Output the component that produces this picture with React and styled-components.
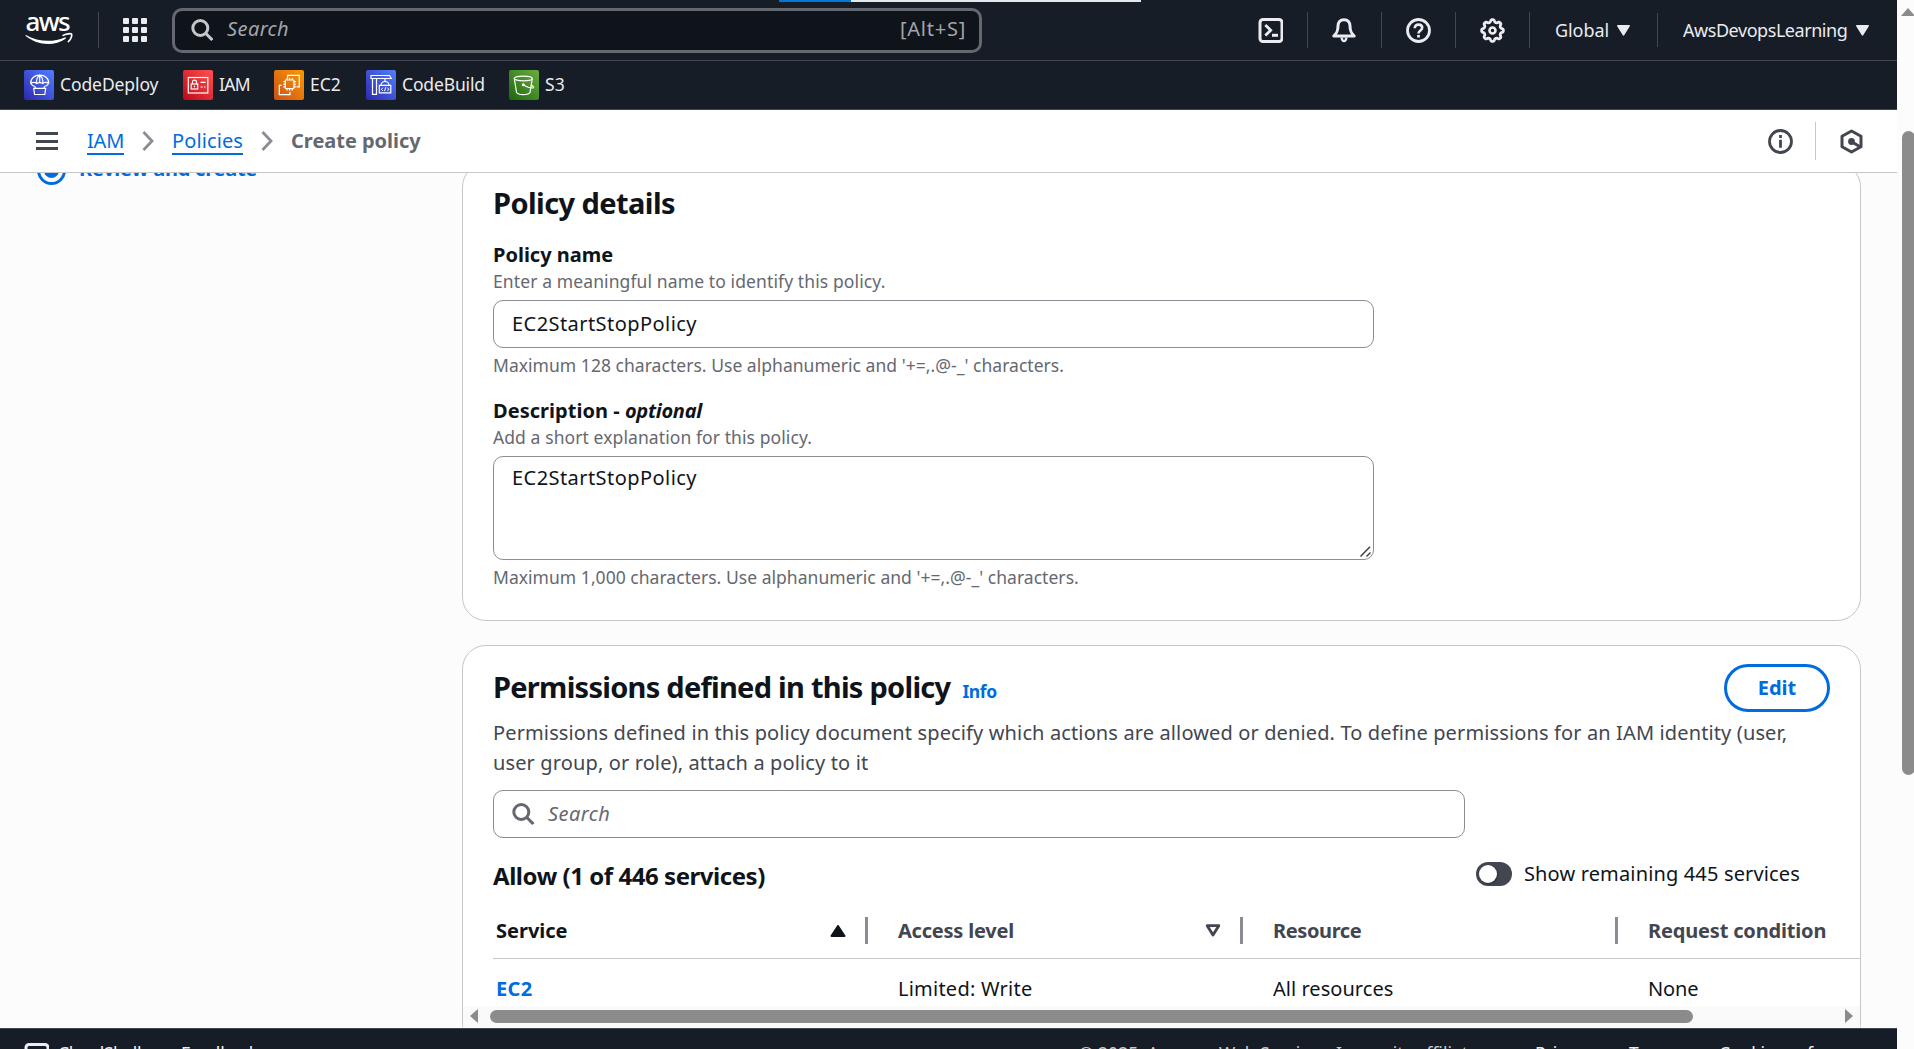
import React from "react";
import styled, { createGlobalStyle, css } from "styled-components";

const GlobalStyle = createGlobalStyle`
  *, *::before, *::after { box-sizing: border-box; }
  html, body { margin: 0; padding: 0; height: 100%; overflow: hidden; }
  body {
    font-family: "Noto Sans", "Open Sans", sans-serif;
    font-size: 20px;
    line-height: 24px;
    color: #0f141a;
    background: #fcfcfd;
  }
  a { color: inherit; text-decoration: none; }
`;

const spacing = css`
  letter-spacing: ${(p) => p.$ls || 0}px;
`;

/* ---------- Shell ---------- */
const Shell = styled.div`
  display: flex;
  width: 100vw;
  height: 100vh;
  overflow: hidden;
`;

const Page = styled.div`
  flex: 1;
  min-width: 0;
  display: flex;
  flex-direction: column;
`;

const LoadStrip = styled.div`
  position: absolute;
  top: 0;
  left: 779px;
  width: 362px;
  height: 2px;
  background: linear-gradient(to right, #0078d7 72px, #e3e8ea 72px);
`;

const ScrollTrack = styled.div`
  width: 17px;
  padding: 8px 0 0 4px;
  background: #fcfcfc;
  overflow: hidden;
`;

const ScrollUp = styled.div`
  width: 14px;
  border-left: 7px solid transparent;
  border-right: 7px solid transparent;
  border-bottom: 8px solid #8b8b8b;
`;

const ScrollThumb = styled.div`
  width: 13px;
  height: 644px;
  margin: 115px 0 0 1px;
  border-radius: 7px;
  background: #8b8b8b;
`;

/* ---------- Top navigation ---------- */
const TopBar = styled.header`
  flex: none;
  height: 61px;
  display: flex;
  align-items: center;
  background: #161d26;
  border-bottom: 1px solid #424650;
  color: #ebebf0;
`;

const LogoSlot = styled.div`
  width: 99px;
  height: 36px;
  padding-left: 25px;
  border-right: 1px solid #424650;
  svg { display: block; margin-top: 3px; overflow: visible; }
`;

const AppsButton = styled.div`
  width: 73px;
  display: flex;
  padding-left: 24px;
`;

const SearchBox = styled.div`
  width: 810px;
  height: 45px;
  display: flex;
  align-items: center;
  padding: 0 13px 0 16px;
  border: 3px solid #656871;
  border-radius: 10px;
  background: #0f141a;
  color: #a4a4ad;
`;

const Placeholder = styled.span`
  flex: 1;
  padding-bottom: ${(p) => p.$lift || 0}px;
  margin-left: ${(p) => p.$gap}px;
  font-style: italic;
  ${spacing}
`;

const Shortcut = styled.span`
  padding-bottom: 2px;
  ${spacing}
`;

const Tools = styled.div`
  display: flex;
  align-items: center;
  margin-left: auto;
`;

const ToolSlot = styled.div`
  width: 74px;
  height: 36px;
  display: flex;
  align-items: center;
  justify-content: center;
  border-right: 1px solid #424650;
`;

const MenuSlot = styled.div`
  width: ${(p) => p.$w}px;
  height: 34px;
  display: flex;
  align-items: center;
  justify-content: space-between;
  padding: 0 ${(p) => (p.$last ? 28 : 27)}px 0 25px;
  border-right: ${(p) => (p.$last ? "none" : "1px solid #424650")};
  font-size: 18px;
  span { padding-bottom: 1px; white-space: nowrap; ${spacing} }
`;

const Favorites = styled.nav`
  flex: none;
  height: 49px;
  display: flex;
  align-items: center;
  padding-left: 24px;
  background: #161d26;
  border-bottom: 1px solid #424650;
`;

const Favorite = styled.a`
  width: ${(p) => p.$w}px;
  display: flex;
  align-items: center;
  gap: 6px;
  font-size: 17.5px;
  color: #ebebf0;
  white-space: nowrap;
  span { padding-bottom: 2px; ${spacing} }
`;

const ServiceIcon = styled.span`
  flex: none;
  width: 30px;
  height: 30px;
  display: block;
  border-radius: 2px;
  background: linear-gradient(45deg, ${(p) => p.$from}, ${(p) => p.$to});
  && { padding: 0; }
  svg { display: block; }
`;

/* ---------- Breadcrumbs ---------- */
const CrumbBar = styled.div`
  flex: none;
  height: 63px;
  display: flex;
  align-items: center;
  padding: 0 0 0 36px;
  background: #fff;
  border-bottom: 1px solid #c6c6cd;
`;

const MenuIcon = styled.div`
  width: 22px;
  height: 18px;
  margin-right: 29px;
  display: flex;
  flex-direction: column;
  justify-content: space-between;
  i { height: 3px; background: #424650; }
`;

const Crumb = styled.a`
  padding-top: 1px;
  border-bottom: 2px solid ${(p) => (p.$current ? "transparent" : "#006ce0")};
  color: ${(p) => (p.$current ? "#656871" : "#006ce0")};
  font-weight: ${(p) => (p.$current ? 700 : 400)};
  ${spacing}
`;

const Chevron = styled.svg`
  width: 12px;
  height: 20px;
  margin: 0 18px;
`;

const PanelButton = styled.div`
  height: 38px;
  display: flex;
  align-items: center;
  justify-content: center;
  width: ${(p) => p.$w}px;
  padding-right: ${(p) => p.$shift || 0}px;
  border-right: ${(p) => (p.$divided ? "1px solid #c6c6cd" : "none")};
`;

const PanelButtons = styled.div`
  margin-left: auto;
  display: flex;
`;

/* ---------- Body ---------- */
const Body = styled.div`
  flex: 1;
  min-height: 0;
  display: flex;
  align-items: flex-start;
  overflow: hidden;
  background: #fcfcfd;
`;

const Steps = styled.aside`
  width: 462px;
  margin-top: -17px;
  padding-left: 37px;
`;

const Step = styled.a`
  display: flex;
  align-items: center;
  gap: 13px;
  height: 29px;
  color: #006ce0;
  font-weight: 700;
  ${spacing}
`;

const StepDot = styled.i`
  width: 29px;
  height: 29px;
  display: grid;
  place-items: center;
  border: 3px solid #006ce0;
  border-radius: 50%;
  &::after {
    content: "";
    width: 15px;
    height: 15px;
    border-radius: 50%;
    background: #006ce0;
  }
`;

const StepText = styled.span`
  padding-bottom: 4px;
`;

const Cards = styled.main`
  width: 1399px;
  margin-top: -10px;
  display: flex;
  flex-direction: column;
  gap: 24px;
`;

const Card = styled.section`
  border: 1px solid #c6c6cd;
  border-radius: 24px;
  background: #fff;
  padding: ${(p) => p.$pad};
`;

const Heading = styled.h2`
  margin: 0;
  font-size: 29px;
  line-height: 36px;
  font-weight: 700;
  ${spacing}
`;

const Field = styled.div`
  width: 881px;
  display: flex;
  flex-direction: column;
  margin-top: ${(p) => p.$top}px;
`;

const Label = styled.label`
  font-weight: 700;
  ${spacing}
  em { letter-spacing: -0.3px; }
`;

const Hint = styled.p`
  margin: ${(p) => p.$top}px 0 0;
  font-size: 17.5px;
  line-height: 22px;
  color: #656871;
  ${spacing}
`;

const control = css`
  display: block;
  width: 100%;
  border: 1px solid #8c8c94;
  border-radius: 10px;
  outline: none;
  background: #fff;
  color: #0f141a;
  font: 20px/24px "Noto Sans", "Open Sans", sans-serif;
  letter-spacing: 0.44px;
`;

const Input = styled.input`
  ${control}
  height: 48px;
  margin: 8px 0 0;
  padding: 0 18px 1px;
`;

const TextAreaWrap = styled.div`
  position: relative;
  margin-top: 8px;
`;

const TextArea = styled.textarea`
  ${control}
  height: 104px;
  margin: 0;
  padding: 9px 18px;
  resize: none;
  overflow: hidden;
`;

const Grip = styled.svg`
  position: absolute;
  right: 2px;
  bottom: 2px;
  width: 12px;
  height: 12px;
`;

const CardHead = styled.div`
  display: flex;
  align-items: flex-start;
  justify-content: space-between;
  padding-right: 30px;
`;

const TitleGroup = styled.div`
  display: flex;
  align-items: baseline;
  gap: 12px;
  padding-top: 5px;
`;

const InfoLink = styled.a`
  font-size: 17.5px;
  font-weight: 700;
  color: #006ce0;
  ${spacing}
`;

const EditButton = styled.button`
  width: 106px;
  height: 48px;
  padding: 0 0 1px;
  border: 3px solid #006ce0;
  border-radius: 24px;
  background: #fff;
  color: #006ce0;
  font: 700 20px/24px "Noto Sans", "Open Sans", sans-serif;
`;

const Description = styled.p`
  margin: 6px 0 0;
  max-width: 1310px;
  line-height: 30px;
  color: #424650;
  ${spacing}
`;

const FilterBox = styled.div`
  width: 972px;
  height: 48px;
  margin-top: 12px;
  display: flex;
  align-items: center;
  padding: 0 18px;
  border: 1px solid #8c8c94;
  border-radius: 10px;
  color: #656871;
`;

const SummaryRow = styled.div`
  display: flex;
  justify-content: space-between;
  margin-top: 23px;
  padding-right: 60px;
`;

const SubHeading = styled.h3`
  margin: 0;
  font-size: 24px;
  line-height: 30px;
  font-weight: 700;
  ${spacing}
`;

const ToggleLabel = styled.div`
  height: 26px;
  display: flex;
  align-items: center;
  gap: 12px;
  span { padding-bottom: 1px; ${spacing} }
`;

const Toggle = styled.i`
  width: 36px;
  height: 24px;
  padding: 3px;
  border-radius: 12px;
  background: #424650;
  &::after {
    content: "";
    display: block;
    width: 18px;
    height: 18px;
    border-radius: 50%;
    background: #fff;
    box-shadow: 1px 1px 2px #0f141a80;
  }
`;

/* ---------- Table ---------- */
const Table = styled.div`
  height: 103px;
  margin-top: 12px;
  overflow: hidden;
`;

const Row = styled.div`
  display: grid;
  grid-template-columns: 375px 375px 375px 1fr;
`;

const HeadRow = styled(Row)`
  height: 56px;
  align-items: center;
  border-bottom: 1px solid #c6c6cd;
`;

const HeadCell = styled.div`
  height: 27px;
  display: flex;
  align-items: center;
  justify-content: space-between;
  padding: 0 19px 0 ${(p) => (p.$first ? 3 : 30)}px;
  border-right: ${(p) => (p.$last ? "none" : "3px solid #8c8c94")};
  color: ${(p) => (p.$first ? "#0f141a" : "#424650")};
  font-weight: 700;
  white-space: nowrap;
  ${spacing}
`;

const Cell = styled.div`
  padding: 18px 0 0 ${(p) => (p.$first ? 3 : 30)}px;
  color: ${(p) => (p.$first ? "#006ce0" : "#0f141a")};
  font-weight: ${(p) => (p.$first ? 700 : 400)};
  ${spacing}
`;

const HScroll = styled.div`
  height: 40px;
  margin-left: -30px;
  display: flex;
  align-items: flex-start;
  padding: 3px 7px 0 7px;
  background: #fafafa;
`;

const HArrow = styled.i`
  border-top: 7.5px solid transparent;
  border-bottom: 7.5px solid transparent;
  border-${(p) => p.$side}: 8px solid #8b8b8b;
`;

const HThumb = styled.div`
  width: 1203px;
  height: 13px;
  margin: 1px auto 0 12px;
  border-radius: 7px;
  background: #8b8b8b;
`;

/* ---------- Footer ---------- */
const Footer = styled.footer`
  flex: none;
  height: 21px;
  display: flex;
  align-items: flex-start;
  padding: 12px 0 0 24px;
  overflow: hidden;
  border-top: 1px solid #424650;
  background: #161d26;
  color: #ebebf0;
  font-size: 17.5px;
  white-space: nowrap;
  svg { flex: none; margin: 2px 9px 0 0; }
`;

const FooterLink = styled.a`
  flex: none;
  width: ${(p) => p.$w}px;
  ${spacing}
`;

const Copyright = styled.span`
  flex: none;
  width: 456px;
  margin-left: auto;
  color: #c6c6cd;
`;

/* ---------- Icons ---------- */
const AwsLogo = () => (
  <svg width="50" height="32" viewBox="0 0 50 32" fill="none">
    <text x="0.6" y="16.4" fill="#fff" fontSize="26" fontWeight="500" textLength="45" lengthAdjust="spacing" fontFamily="Noto Sans, sans-serif">aws</text>
    <path d="M0.4 20.6c0-.6.5-.7 1-.4 6.600 3.700 13.800 5.600 21.600 5.600 5.800 0 11.600-1.200 16.800-3.400.9-.3 1.600.6.800 1.300-4.700 3.600-11.500 5.300-17.300 5.300-8.400 0-16.300-3-22.600-8z" fill="#fff" />
    <path d="M38.200 20.400c2.300-1.800 8-2 8.400-1.300.5 1-.5 5.500-3.200 7.500" stroke="#fff" strokeWidth="1.700" strokeLinecap="round" />
  </svg>
);

const AppsIcon = () => (
  <svg width="24" height="24" viewBox="0 0 24 24" fill="#ebebf0">
    {[0, 9, 18].map((y) =>
      [0, 9, 18].map((x) => <rect key={`${x}-${y}`} x={x} y={y} width="6" height="6" rx="1" />)
    )}
  </svg>
);

const Magnifier = ({ color }) => (
  <svg width="22" height="22" viewBox="0 0 22 22" fill="none" stroke={color} strokeWidth="3">
    <circle cx="9.300" cy="9" r="7.500" />
    <path d="M14.600 14.300L21.300 21" />
  </svg>
);

const TerminalIcon = () => (
  <svg width="25" height="25" viewBox="0 0 25 25" fill="none" stroke="#ebebf0" strokeWidth="3">
    <rect x="2" y="1.500" width="22" height="22" rx="3" />
    <path d="M7.300 7l5.400 5.300-5.400 5.300" strokeWidth="2.800" />
    <path d="M14 17.300h6" />
  </svg>
);

const BellIcon = () => (
  <svg width="26" height="25" viewBox="1 0 26 25" fill="none" stroke="#ebebf0" strokeWidth="3" strokeLinejoin="round">
    <path d="M13 1.800c-4 0-6 2.700-6 6.300 0 5.400-1.400 7.200-4.200 9.900h20.400c-2.800-2.700-4.200-4.500-4.200-9.900 0-3.600-2-6.300-6-6.300z" />
    <path d="M9.400 19.500c.3 3 1.600 4.700 3.600 4.700s3.300-1.700 3.600-4.700z" fill="#ebebf0" stroke="none" />
    <circle cx="13" cy="20.800" r="1" fill="#161d26" stroke="none" />
  </svg>
);

const HelpIcon = () => (
  <svg width="25" height="25" viewBox="0 0 25 25" fill="none" stroke="#ebebf0" strokeWidth="2.800">
    <circle cx="12.500" cy="12.500" r="11" />
    <path d="M8.800 10.200c0-2.300 1.500-3.600 3.700-3.600s3.700 1.300 3.700 3.200c0 2.700-3.700 2.600-3.700 5.700" strokeWidth="2.600" />
    <path d="M12.500 16.900v2.600" />
  </svg>
);

const gearPath = (() => {
  const points = [];
  for (let i = 0; i <= 128; i += 1) {
    const a = (i / 128) * Math.PI * 2;
    const wave = Math.tanh(1.6 * Math.cos(8 * a)) / Math.tanh(1.6);
    const r = 9.7 + 1.15 * wave;
    points.push(`${(12.5 + r * Math.sin(a)).toFixed(2)} ${(12.5 - r * Math.cos(a)).toFixed(2)}`);
  }
  return `M${points.join("L")}Z`;
})();

const GearIcon = () => (
  <svg width="25" height="25" viewBox="0 0 25 25" fill="none" stroke="#ebebf0" strokeWidth="2.800" strokeLinejoin="round">
    <path d={gearPath} />
    <circle cx="12.500" cy="12.500" r="3" strokeWidth="2.600" />
  </svg>
);

const Caret = () => (
  <svg width="13" height="11" viewBox="0 0 13 11" fill="#ebebf0">
    <path d="M.8 0h11.400c.7 0 1 .6.6 1.200L7.200 10.300c-.3.6-1.100.6-1.400 0L.2 1.200C-.2.6.1 0 .8 0z" />
  </svg>
);

const InfoIcon = () => (
  <svg width="25" height="25" viewBox="0 0 25 25" fill="none" stroke="#424650" strokeWidth="2.800">
    <circle cx="12.500" cy="12.500" r="11" />
    <path d="M12.500 6v3M12.500 10.800v8" />
  </svg>
);

const HexIcon = () => (
  <svg width="23" height="25" viewBox="0 0 23 25" fill="none" stroke="#424650" strokeWidth="3" strokeLinejoin="round">
    <path d="M11.500 2l9.500 5.200v10.600L11.500 23 2 17.800V7.200z" />
    <circle cx="11.500" cy="12.500" r="3.400" fill="#424650" stroke="none" />
    <path d="M12 13l8 4.800" />
  </svg>
);

const Glyph = ({ children }) => (
  <svg width="30" height="30" viewBox="0 0 30 30" fill="none" stroke="#fff" strokeWidth="1.200">
    {children}
  </svg>
);

const DeployGlyph = () => (
  <Glyph>
    <path d="M6.700 13.500c-.5-5 3.800-8.300 9-8.300s9.500 3.300 9 8.300M6.700 13.500c1 1.600 2.400 2.600 4.300 3M24.700 13.500c-1 1.600-2.400 2.600-4.300 3M6.700 13.500c2-1.400 4-1.400 6 0 2-1.200 4-1.200 6 0 2-1.400 4-1.400 6 0" />
    <path d="M12.700 13.500c-.6-3.600.6-6.600 3-8.300 2.400 1.700 3.600 4.700 3 8.300M15.700 5.200v7.800M11 16.500l.5 2M20.400 16.500l-.5 2" />
    <path d="M9.700 18.300h12l-.9 6.200H10.600z" />
  </Glyph>
);

const IamGlyph = () => (
  <Glyph>
    <rect x="5.300" y="7.500" width="19.500" height="15.500" />
    <rect x="8.200" y="14" width="6.500" height="5" />
    <path d="M9.500 14v-2c0-2.600 4-2.600 4 0v2M11.500 15.800v1.500M17.500 12.300h5M17.500 17h2.200M21 17h1.500" />
  </Glyph>
);

const Ec2Glyph = () => (
  <Glyph>
    <path d="M13.700 8V5.300h11.600v11.500h-2.800M7.700 15.300H5.300v9.400H16v-2.900" />
    <rect x="11.300" y="10" width="8.600" height="8.600" rx=".8" />
    <path d="M13 8v2M15.600 8v2M18.200 8v2M13 18.600v2M15.600 18.600v2M18.200 18.600v2M9.300 11.700h2M9.300 14.300h2M9.300 16.900h2M19.900 11.700h2M19.900 14.300h2M19.900 16.900h2" />
  </Glyph>
);

const BuildGlyph = () => (
  <Glyph>
    <path d="M5 5.500h18.500l1.800 3H5zM6.500 8.500v15.800h4V8.500M19 8.500v3" />
    <path d="M13.300 15.300h11.500v7.500H13.300zM14.800 15.300c.5-2.500 2-3.800 4.200-3.800s3.700 1.300 4.200 3.800" />
    <path d="M16.800 17.700l-1.400 1.600 1.400 1.600M19.700 17.200l-1.200 4M21.500 17.700l1.300 1.600-1.300 1.600" strokeWidth="1" />
  </Glyph>
);

const S3Glyph = () => (
  <Glyph>
    <ellipse cx="14.300" cy="8.500" rx="9" ry="2.300" />
    <path d="M5.300 8.500l2.300 14c.8 1.500 3.600 2.100 6.700 2.100s5.900-.6 6.700-2.100l2.300-14" />
    <path d="M14.300 15c3.200 1.900 6.500 3 9.300 3 1.600 0 1.700-1.200-1.300-2.600" />
    <circle cx="14.300" cy="14.700" r=".9" fill="#fff" />
  </Glyph>
);

const SortUp = () => (
  <svg width="16" height="12" viewBox="0 0 16 12" fill="#0f141a">
    <path d="M7.200.5c.4-.6 1.200-.6 1.600 0l6.600 9.900c.4.700 0 1.500-.8 1.500H1.400c-.8 0-1.200-.8-.8-1.500z" />
  </svg>
);

const SortNone = () => (
  <svg width="16" height="13" viewBox="0 0 16 13" fill="none" stroke="#424650" strokeWidth="2.800" strokeLinejoin="round">
    <path d="M2.200 1.700h11.600L8 11z" />
  </svg>
);

const favorites = [
  { name: "CodeDeploy", w: 159, ls: -0.1, from: "#2e27ad", to: "#527fff", glyph: <DeployGlyph /> },
  { name: "IAM", w: 91, ls: -0.7, from: "#bd0816", to: "#ff5252", glyph: <IamGlyph /> },
  { name: "EC2", w: 92, ls: 0, from: "#c8511b", to: "#ff9900", glyph: <Ec2Glyph /> },
  { name: "CodeBuild", w: 143, ls: -0.15, from: "#2e27ad", to: "#527fff", glyph: <BuildGlyph /> },
  { name: "S3", w: 70, ls: 0.1, from: "#1b660f", to: "#6cae3e", glyph: <S3Glyph /> },
];

export default function App() {
  return (
    <Shell>
      <GlobalStyle />
      <LoadStrip />
      <Page>
        <TopBar>
          <LogoSlot><AwsLogo /></LogoSlot>
          <AppsButton><AppsIcon /></AppsButton>
          <SearchBox>
            <Magnifier color="#c6c6cd" />
            <Placeholder $gap={14} $ls={0.4} $lift={2}>Search</Placeholder>
            <Shortcut $ls={0.75}>[Alt+S]</Shortcut>
          </SearchBox>
          <Tools>
            <ToolSlot><TerminalIcon /></ToolSlot>
            <ToolSlot><BellIcon /></ToolSlot>
            <ToolSlot><HelpIcon /></ToolSlot>
            <ToolSlot><GearIcon /></ToolSlot>
            <MenuSlot $w={128} $ls={-0.08}><span>Global</span><Caret /></MenuSlot>
            <MenuSlot $w={239} $ls={-0.45} $last><span>AwsDevopsLearning</span><Caret /></MenuSlot>
          </Tools>
        </TopBar>

        <Favorites>
          {favorites.map((f) => (
            <Favorite key={f.name} $w={f.w} $ls={f.ls}>
              <ServiceIcon $from={f.from} $to={f.to}>{f.glyph}</ServiceIcon>
              <span>{f.name}</span>
            </Favorite>
          ))}
        </Favorites>

        <CrumbBar>
          <MenuIcon><i /><i /><i /></MenuIcon>
          <Crumb $ls={-0.2}>IAM</Crumb>
          <Chevron viewBox="0 0 12 20" fill="none" stroke="#8c8c94" strokeWidth="2.800"><path d="M1.500 1l8.500 9-8.500 9" /></Chevron>
          <Crumb $ls={0.1}>Policies</Crumb>
          <Chevron viewBox="0 0 12 20" fill="none" stroke="#8c8c94" strokeWidth="2.800"><path d="M1.500 1l8.500 9-8.500 9" /></Chevron>
          <Crumb $current $ls={-0.03}>Create policy</Crumb>
          <PanelButtons>
            <PanelButton $w={70} $divided><InfoIcon /></PanelButton>
            <PanelButton $w={81} $shift={11}><HexIcon /></PanelButton>
          </PanelButtons>
        </CrumbBar>

        <Body>
          <Steps>
            <Step $ls={-0.24}><StepDot /><StepText>Review and create</StepText></Step>
          </Steps>
          <Cards>
            <Card $pad="21px 30px 32px">
              <Heading $ls={-0.57}>Policy details</Heading>
              <Field $top={22}>
                <Label>Policy name</Label>
                <Hint $top={3} $ls={0.11}>Enter a meaningful name to identify this policy.</Hint>
                <Input defaultValue="EC2StartStopPolicy" />
                <Hint $top={6} $ls={0.035}>Maximum 128 characters. Use alphanumeric and '+=,.@-_' characters.</Hint>
              </Field>
              <Field $top={23}>
                <Label $ls={0.03}>Description - <em>optional</em></Label>
                <Hint $top={3} $ls={0.09}>Add a short explanation for this policy.</Hint>
                <TextAreaWrap>
                  <TextArea defaultValue="EC2StartStopPolicy" />
                  <Grip viewBox="0 0 12 12" fill="none" stroke="#3c3c3c" strokeWidth="1.400">
                    <path d="M.5 10.500L10 .8M6.500 10.500L10.500 6.500" />
                  </Grip>
                </TextAreaWrap>
                <Hint $top={6} $ls={0.035}>Maximum 1,000 characters. Use alphanumeric and '+=,.@-_' characters.</Hint>
              </Field>
            </Card>

            <Card $pad="18px 0 0 30px">
              <CardHead>
                <TitleGroup>
                  <Heading $ls={-0.73}>Permissions defined in this policy</Heading>
                  <InfoLink $ls={-0.4}>Info</InfoLink>
                </TitleGroup>
                <EditButton>Edit</EditButton>
              </CardHead>
              <Description $ls={0.128}>
                Permissions defined in this policy document specify which actions are allowed or denied. To define
                permissions for an IAM identity (user, user group, or role), attach a policy to it
              </Description>
              <FilterBox>
                <Magnifier color="#656871" />
                <Placeholder $gap={14} $ls={0.45} $lift={1}>Search</Placeholder>
              </FilterBox>
              <SummaryRow>
                <SubHeading $ls={-0.45}>Allow (1 of 446 services)</SubHeading>
                <ToggleLabel $ls={0.15}><Toggle /><span>Show remaining 445 services</span></ToggleLabel>
              </SummaryRow>
              <Table>
                <HeadRow>
                  <HeadCell $first>Service<SortUp /></HeadCell>
                  <HeadCell $ls={-0.22}>Access level<SortNone /></HeadCell>
                  <HeadCell $ls={-0.38}>Resource</HeadCell>
                  <HeadCell $ls={-0.17} $last>Request condition</HeadCell>
                </HeadRow>
                <Row>
                  <Cell $first $ls={0.4}>EC2</Cell>
                  <Cell $ls={0.23}>Limited: Write</Cell>
                  <Cell $ls={0.04}>All resources</Cell>
                  <Cell $ls={-0.15}>None</Cell>
                </Row>
              </Table>
              <HScroll>
                <HArrow $side="right" />
                <HThumb />
                <HArrow $side="left" />
              </HScroll>
            </Card>
          </Cards>
        </Body>

        <Footer>
          <TerminalIcon />
          <FooterLink $w={123} $ls={-0.4}>CloudShell</FooterLink>
          <FooterLink $w={100} $ls={-0.1}>Feedback</FooterLink>
          <Copyright>© 2025, Amazon Web Services, Inc. or its affiliates.</Copyright>
          <FooterLink $w={94}>Privacy</FooterLink>
          <FooterLink $w={90}>Terms</FooterLink>
          <FooterLink $w={178}>Cookie preferences</FooterLink>
        </Footer>
      </Page>
      <ScrollTrack>
        <ScrollUp />
        <ScrollThumb />
      </ScrollTrack>
    </Shell>
  );
}
